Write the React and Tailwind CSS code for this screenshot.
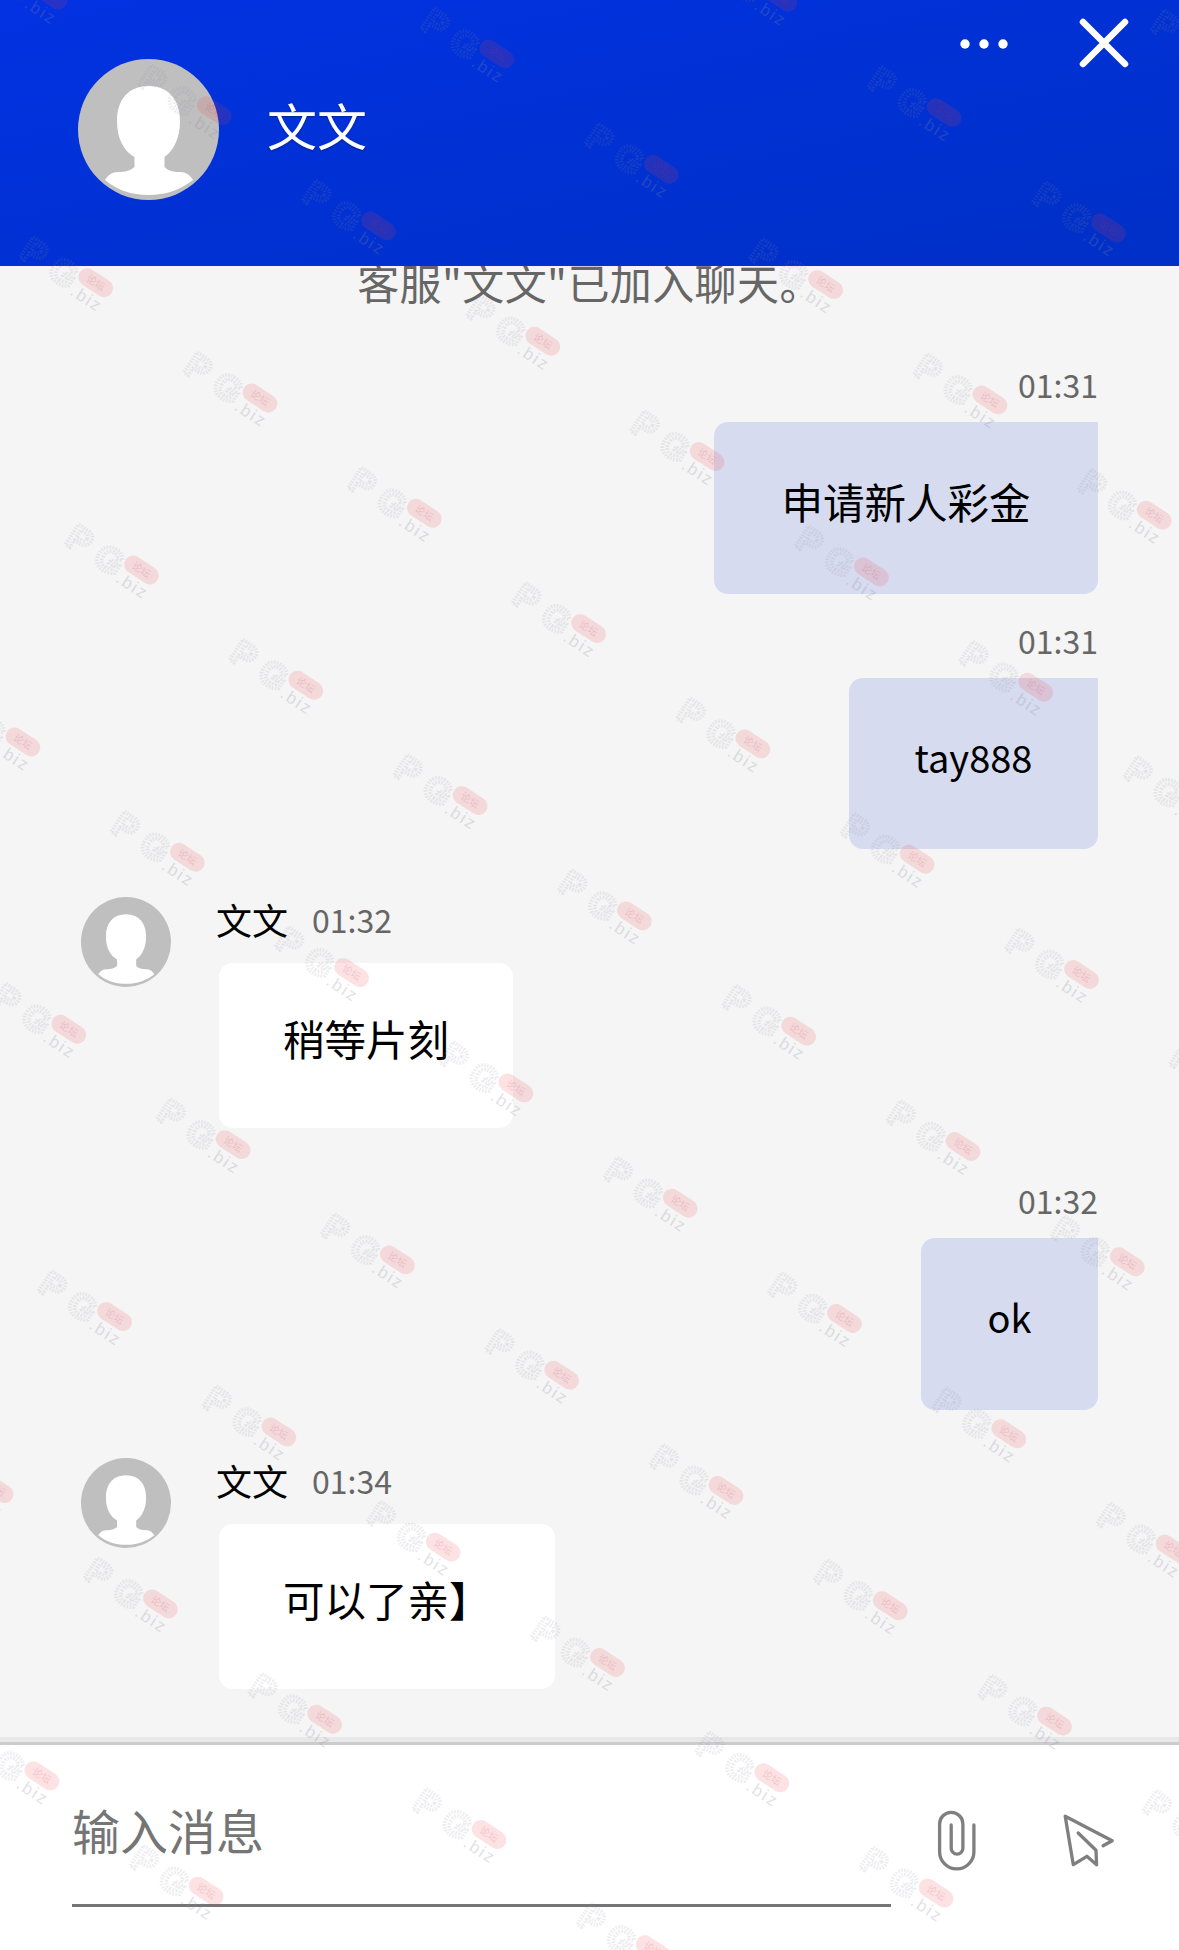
const FONT = "font-['Noto_Sans_CJK_SC','Noto_Sans',sans-serif]";

// diagonal grid the PG.biz stamps sit on
const STAMP_A = [164.3, 115.3];
const STAMP_B = [118.5, -172];
const STAMP_ORIGIN = [260, 398];

const stamps = [];
for (let k = -14; k <= 14; k++) {
  for (let m = -14; m <= 14; m++) {
    const x = STAMP_ORIGIN[0] + k * STAMP_A[0] + m * STAMP_B[0];
    const y = STAMP_ORIGIN[1] + k * STAMP_A[1] + m * STAMP_B[1];
    if (x > -40 && x < 1290 && y > -40 && y < 2000) stamps.push([x, y]);
  }
}

const Stamp = ({ x, y }) => (
  <g transform={`translate(${x} ${y}) rotate(33)`}>
    <g
      fontFamily="Liberation Sans"
      fontWeight="700"
      fontSize="35"
      fill="none"
      stroke="#8a8a9a"
      strokeWidth="3.6"
      strokeDasharray="1.5 1.5"
      opacity="0.15"
    >
      <text x="-80" y="20">P</text>
      <text x="-46" y="21">G</text>
    </g>
    <rect x="-19" y="-9" width="38" height="18" rx="9" fill="#f03a4a" opacity="0.15" />
    <text x="0" y="3.5" textAnchor="middle" fontFamily="Noto Sans CJK SC" fontSize="10" fill="#c0303c" opacity="0.16">
      论坛
    </text>
    <text x="1" y="24" textAnchor="middle" fontFamily="Liberation Sans" fontSize="17" letterSpacing="2" fill="#8a8a9a" opacity="0.24">
      .biz
    </text>
  </g>
);

const Watermark = () => (
  <svg className="absolute inset-0 z-10 pointer-events-none" width="1179" height="1950">
    {stamps.map(([x, y], i) => (
      <Stamp key={i} x={x} y={y} />
    ))}
  </svg>
);

const Avatar = ({ className }) => (
  <svg viewBox="0 0 141 141" className={className}>
    <circle cx="70.5" cy="70.5" r="70.5" fill="#bfbfbf" />
    <path
      fill="#fff"
      d="M70.5 27C90 27 102 40 102 62C102 80 95 92 86.5 98V108C90 112 95 113 102 113C108 113 112 116 115 121C102 131 88 136 70.5 136C53 136 39 131 27 121C30 116 34 113 40 113C47 113 52 112 56.5 108V98C46 92 39 80 39 62C39 40 51 27 70.5 27Z"
    />
  </svg>
);

const MyMessage = ({ time, text, width, latin }) => (
  <div className="flex flex-col items-end pt-[24px] pr-[81px]">
    <div className="h-[44px] mb-[16px] flex items-center text-[32px] text-[#666]">{time}</div>
    <div
      className={`${width} ${latin ? "text-[38px]" : "text-[41.5px]"} h-[171.5px] pb-[14px] flex items-center justify-center bg-[#d7dbef] rounded-[14px] rounded-tr-none text-black`}
    >
      {text}
    </div>
  </div>
);

const AgentMessage = ({ time, text, width }) => (
  <div className="flex pt-[48px] pb-[26px] pl-[81px]">
    <Avatar className="w-[90px] h-[90px] shrink-0" />
    <div className="ml-[45px] flex flex-col items-start">
      <div className="h-[44px] mb-[22px] flex items-center gap-[24px]">
        <span className="text-[36px] text-black">文文</span>
        <span className="text-[32px] text-[#666]">{time}</span>
      </div>
      <div className={`${width} ml-[3px] h-[165px] pb-[14px] pl-[64px] flex items-center bg-white rounded-[14px] text-[41.5px] text-black`}>
        {text}
      </div>
    </div>
  </div>
);

const App = () => {
  return (
    <div className={`relative w-[1179px] h-[1950px] overflow-hidden flex flex-col bg-[#f5f5f5] ${FONT}`}>
      <header className="relative z-[1] h-[266px] shrink-0 flex items-center pl-[78px] pr-[50px] bg-gradient-to-br from-[#0232e2] to-[#0030c6]">
        <Avatar className="w-[141px] h-[141px] shrink-0 mb-[7px]" />
        <div className="ml-[48px] mb-[17px] text-[50px] text-white [text-shadow:0_1px_2px_rgba(0,0,0,0.3)]">文文</div>

        <div className="ml-auto self-start flex items-start gap-[62px] pt-[18px]">
          <svg width="58" height="52" viewBox="0 0 58 52" className="fill-white">
            <circle cx="6" cy="26" r="4.7" />
            <circle cx="25" cy="26" r="4.7" />
            <circle cx="44" cy="26" r="4.7" />
          </svg>
          <svg width="50" height="50" viewBox="0 0 50 50" fill="none" stroke="white" strokeWidth="6.5" strokeLinecap="round">
            <path d="M4 4L46 46M46 4L4 46" />
          </svg>
        </div>
      </header>

      <main className="flex-1 min-h-0 overflow-hidden">
        <p className="-mt-[14px] mb-[26px] h-[60px] leading-[60px] text-center text-[42px] tracking-[0.4px] text-[#666]">客服"文文"已加入聊天。</p>
        <MyMessage time="01:31" text="申请新人彩金" width="w-[384px]" />
        <MyMessage time="01:31" text="tay888" width="w-[249px]" latin />
        <AgentMessage time="01:32" text="稍等片刻" width="w-[294px]" />
        <MyMessage time="01:32" text="ok" width="w-[177px]" latin />
        <AgentMessage time="01:34" text="可以了亲】" width="w-[336px]" />
      </main>

      <footer className="h-[208px] shrink-0 flex items-start pt-[30px] pl-[72px] bg-white border-t-[3px] border-[#cccccc] shadow-[0_-5px_0_#e8e8e8]">
        <input
          placeholder="输入消息"
          className="w-[819px] h-[132px] pb-[22px] shrink-0 bg-transparent outline-none border-b-[3px] border-[#757575] text-[48px] text-[#333] placeholder:text-[#757575]"
        />
        <svg width="40" height="61" viewBox="0 0 40 61" fill="none" stroke="#7f7f7f" strokeWidth="3.3" strokeLinecap="round" className="ml-[46px] mt-[35px] shrink-0">
          <path d="M36.9 15V41.7A17.15 17.15 0 0 1 2.6 41.7V14A11.65 11.65 0 0 1 25.9 14V38.3A5.85 5.85 0 0 1 14.2 38.3V15" />
        </svg>
        <svg width="54" height="55" viewBox="0 0 54 55" fill="none" stroke="#7f7f7f" strokeWidth="3.3" strokeLinecap="round" strokeLinejoin="round" className="ml-[85px] mt-[38px] shrink-0">
          <path d="M41.1 32.7L50.2 27.7L3.2 3.3L11.3 51.7L24.9 43.3L34.6 51.7L34 37.3L16.2 20" />
        </svg>
      </footer>

      <Watermark />
    </div>
  );
};

export default App;
